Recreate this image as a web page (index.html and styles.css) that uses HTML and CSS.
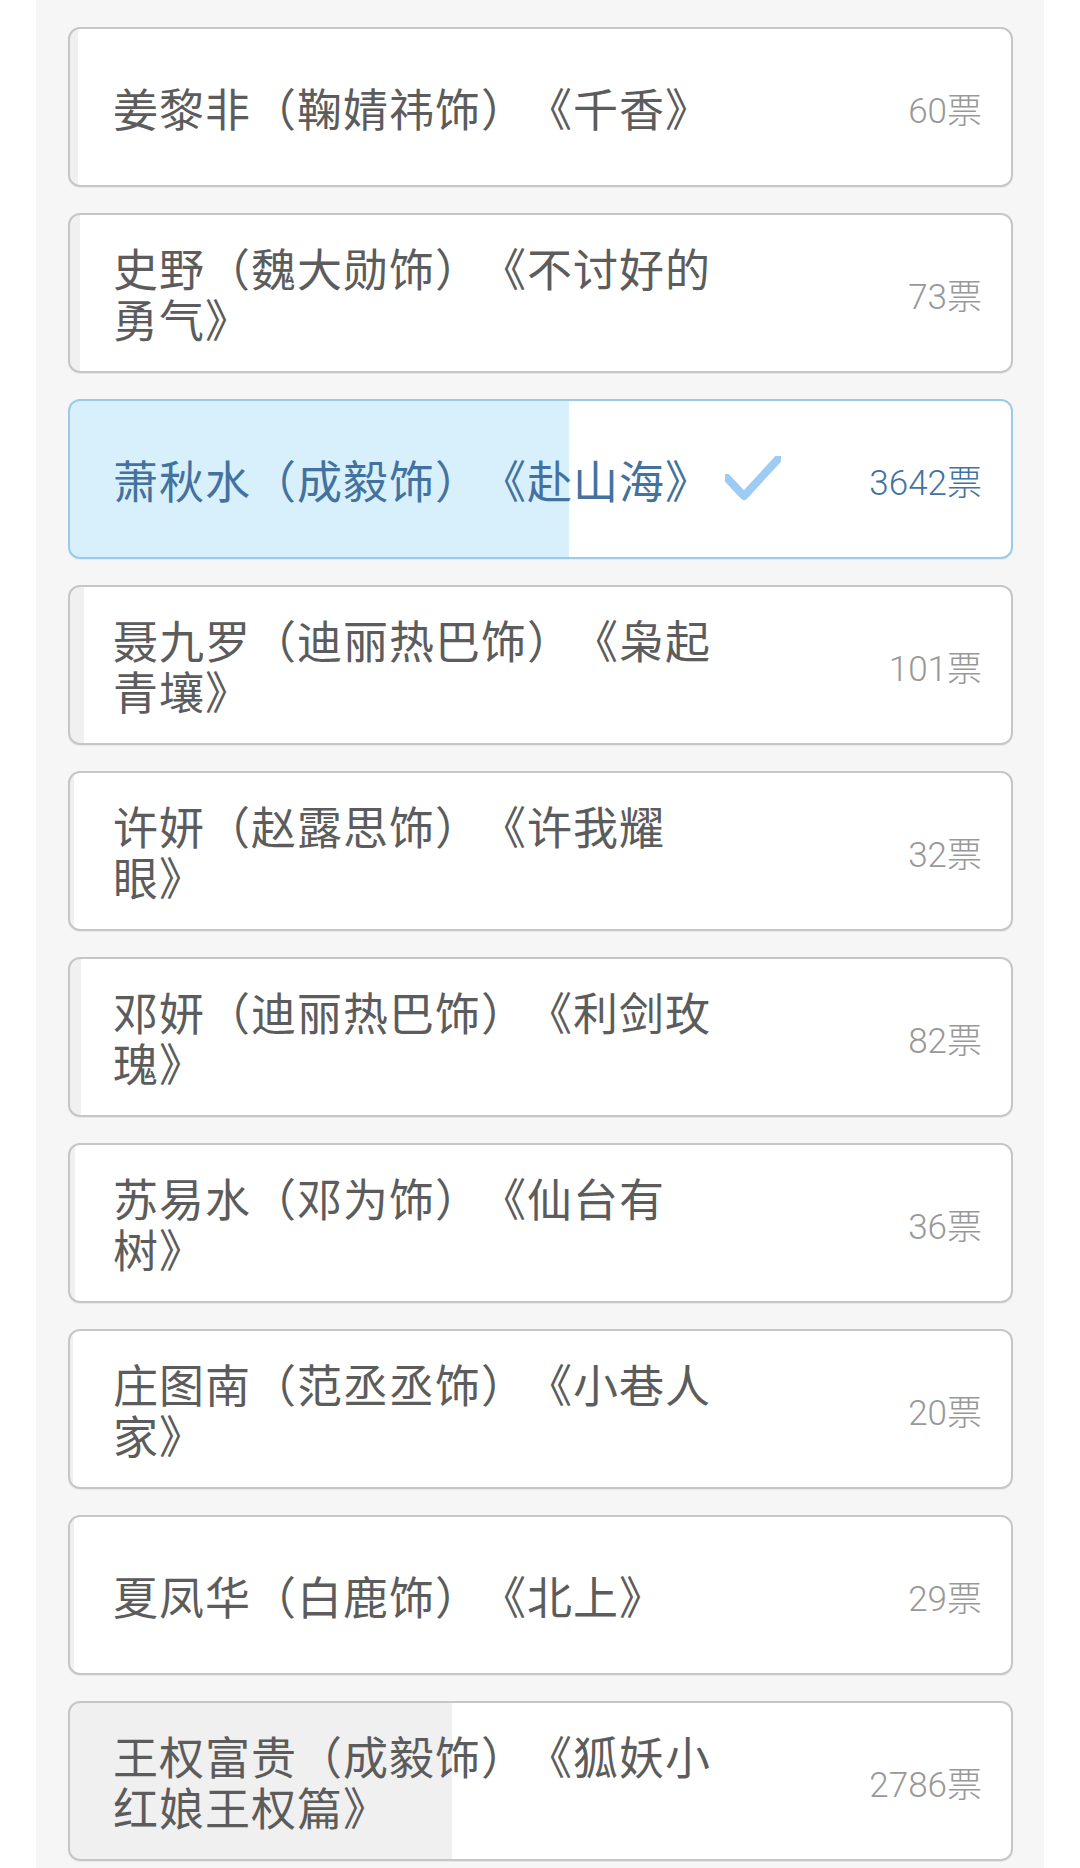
FILE: index.html
```html
<!DOCTYPE html>
<html>
<head>
  <meta charset="UTF-8">
  <meta name="viewport" content="width=device-width, initial-scale=1.0">
  <title>投票</title>
  <link rel="stylesheet" href="styles.css">
</head>
<body>
  <div class="panel">
    <div class="option" style="--pct:0.87%">
      <div class="name">姜黎非（鞠婧祎饰）《千香》</div>
      <div class="count">60票</div>
    </div>
    <div class="option" style="--pct:1.06%">
      <div class="name">史野（魏大勋饰）《不讨好的<br>勇气》</div>
      <div class="count">73票</div>
    </div>
    <div class="option picked" style="--pct:53.08%">
      <div class="name">萧秋水（成毅饰）《赴山海》<svg class="check" width="56" height="46" viewBox="0 0 56 46"><path d="M2 22 L19 40 L54 2" fill="none" stroke="#9ccbf3" stroke-width="8" stroke-linecap="round" stroke-linejoin="round"/></svg></div>
      <div class="count">3642票</div>
    </div>
    <div class="option" style="--pct:1.47%">
      <div class="name">聂九罗（迪丽热巴饰）《枭起<br>青壤》</div>
      <div class="count">101票</div>
    </div>
    <div class="option" style="--pct:0.47%">
      <div class="name">许妍（赵露思饰）《许我耀<br>眼》</div>
      <div class="count">32票</div>
    </div>
    <div class="option" style="--pct:1.2%">
      <div class="name">邓妍（迪丽热巴饰）《利剑玫<br>瑰》</div>
      <div class="count">82票</div>
    </div>
    <div class="option" style="--pct:0.52%">
      <div class="name">苏易水（邓为饰）《仙台有<br>树》</div>
      <div class="count">36票</div>
    </div>
    <div class="option" style="--pct:0.29%">
      <div class="name">庄图南（范丞丞饰）《小巷人<br>家》</div>
      <div class="count">20票</div>
    </div>
    <div class="option" style="--pct:0.42%">
      <div class="name">夏凤华（白鹿饰）《北上》</div>
      <div class="count">29票</div>
    </div>
    <div class="option" style="--pct:40.6%">
      <div class="name">王权富贵（成毅饰）《狐妖小<br>红娘王权篇》</div>
      <div class="count">2786票</div>
    </div>
  </div>
</body>
</html>
```

FILE: styles.css
```css
body {
  margin: 0;
  background-color: #fff;
  font-family: "Noto Sans CJK SC", "Noto Sans", sans-serif;
}
.panel {
  margin: 0 36px;
  min-height: 1868px;
  box-sizing: border-box;
  background-color: #f6f6f6;
  padding: 27px 31px 0 32px;
  display: flex;
  flex-direction: column;
  gap: 26px;
}
.option {
  height: 160px;
  box-sizing: border-box;
  border: 2px solid #c6c6c6;
  border-radius: 12px;
  box-shadow: 0 1px 1px rgba(0, 0, 0, 0.06);
  background: linear-gradient(to right, #f0f0f0 var(--pct), #fff var(--pct));
  display: flex;
  align-items: center;
  padding: 0 29px 0 43px;
}
.name {
  width: 720px;
  font-size: 45px;
  letter-spacing: 1px;
  line-height: 51px;
  color: #5c5c5c;
  text-spacing-trim: space-all;
  display: flex;
  align-items: center;
}
.count {
  margin-left: auto;
  font-family: Roboto, "Noto Sans CJK SC", sans-serif;
  font-weight: 300;
  font-size: 35px;
  color: #989898;
}
.picked {
  border-color: #9ccbe9;
  background: linear-gradient(to right, #d7f0fc var(--pct), #fff var(--pct));
}
.picked .name,
.picked .count {
  color: #44729f;
}
.check {
  margin-left: 14px;
  flex-shrink: 0;
}
```
